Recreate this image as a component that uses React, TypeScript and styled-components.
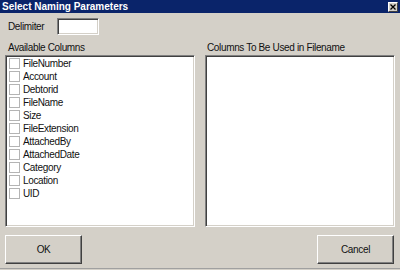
import React from "react";
import styled, { createGlobalStyle } from "styled-components";

const Global = createGlobalStyle`
  html, body { margin: 0; padding: 0; background: #d4d0c8; }
  * { box-sizing: border-box; }
`;

const Window = styled.div`
  width: 400px;
  height: 270px;
  background: #d4d0c8;
  display: flex;
  flex-direction: column;
  font-family: "Liberation Sans", Arial, sans-serif;
  font-size: 10px;
  letter-spacing: -0.35px;
  color: #111;
  overflow: hidden;
`;

const TitleBar = styled.div`
  height: 13px;
  background: #0a246a;
  display: flex;
  align-items: center;
  justify-content: space-between;
  padding: 0 2px 0 2px;
`;

const Title = styled.span`
  color: #fff;
  font-weight: bold;
  font-size: 10px;
  letter-spacing: 0;
  line-height: 13px;
`;

const CloseButton = styled.div`
  width: 10px;
  height: 10px;
  background: #d4d0c8;
  border-top: 1px solid #fff;
  border-left: 1px solid #fff;
  border-right: 1px solid #404040;
  border-bottom: 1px solid #404040;
  display: flex;
  align-items: center;
  justify-content: center;
`;

const Body = styled.div`
  flex: 1;
  display: flex;
  flex-direction: column;
  padding: 5px 5px 0 5px;
`;

const DelimiterRow = styled.div`
  display: flex;
  align-items: center;
  height: 17px;
`;

const Label = styled.span`
  width: 52px;
  padding-left: 3px;
  line-height: 13px;
`;

const TextInput = styled.div`
  width: 42px;
  height: 17px;
  background: #fff;
  border-top: 1px solid #808080;
  border-left: 1px solid #808080;
  border-right: 1px solid #fff;
  border-bottom: 1px solid #fff;
  box-shadow: inset 1px 1px 0 #404040, inset -1px -1px 0 #d4d0c8;
`;

const Columns = styled.div`
  display: grid;
  grid-template-columns: 190px 190px;
  column-gap: 10px;
  margin-top: 6px;
`;

const Column = styled.div`
  display: flex;
  flex-direction: column;
`;

const ColumnLabel = styled.div<{ $indent: number }>`
  line-height: 13px;
  height: 13px;
  padding-left: ${(p) => p.$indent}px;
  margin-bottom: 1px;
`;

const ListBox = styled.div`
  height: 172px;
  background: #fff;
  border-top: 1px solid #808080;
  border-left: 1px solid #808080;
  border-right: 1px solid #fff;
  border-bottom: 1px solid #fff;
  box-shadow: inset 1px 1px 0 #404040, inset -1px -1px 0 #d4d0c8;
  padding: 1px 1px;
  display: flex;
  flex-direction: column;
`;

const Row = styled.div`
  height: 13px;
  display: flex;
  align-items: center;
  padding-left: 2px;
`;

const Check = styled.span`
  width: 11px;
  height: 11px;
  border: 1px solid #b4b4b4;
  background: #fff;
  margin-right: 3px;
  flex: none;
`;

const RowText = styled.span`
  line-height: 13px;
`;

const Buttons = styled.div`
  display: flex;
  justify-content: space-between;
  margin-top: 8px;
  padding-right: 1px;
`;

const Button = styled.div`
  width: 77px;
  height: 29px;
  display: flex;
  align-items: center;
  justify-content: center;
  background: #d4d0c8;
  border-top: 1px solid #fff;
  border-left: 1px solid #fff;
  border-right: 1px solid #404040;
  border-bottom: 1px solid #404040;
  box-shadow: inset -1px -1px 0 #808080;
`;

const BottomEdge = styled.div`
  margin-top: auto;
  height: 2px;
  border-top: 1px solid #a0a0a0;
`;

const items = [
  "FileNumber",
  "Account",
  "Debtorid",
  "FileName",
  "Size",
  "FileExtension",
  "AttachedBy",
  "AttachedDate",
  "Category",
  "Location",
  "UID",
];

export default function App() {
  return (
    <>
      <Global />
      <Window>
        <TitleBar>
          <Title>Select Naming Parameters</Title>
          <CloseButton>
            <svg width="6" height="6" viewBox="0 0 6 6">
              <path d="M0.5 0.5 L5.5 5.5 M5.5 0.5 L0.5 5.5" stroke="#000" strokeWidth="1.3" />
            </svg>
          </CloseButton>
        </TitleBar>
        <Body>
          <DelimiterRow>
            <Label>Delimiter</Label>
            <TextInput />
          </DelimiterRow>
          <Columns>
            <Column>
              <ColumnLabel $indent={3}>Available Columns</ColumnLabel>
              <ListBox>
                {items.map((it) => (
                  <Row key={it}>
                    <Check />
                    <RowText>{it}</RowText>
                  </Row>
                ))}
              </ListBox>
            </Column>
            <Column>
              <ColumnLabel $indent={2}>Columns To Be Used in Filename</ColumnLabel>
              <ListBox />
            </Column>
          </Columns>
          <Buttons>
            <Button>OK</Button>
            <Button>Cancel</Button>
          </Buttons>
        </Body>
        <BottomEdge />
      </Window>
    </>
  );
}
